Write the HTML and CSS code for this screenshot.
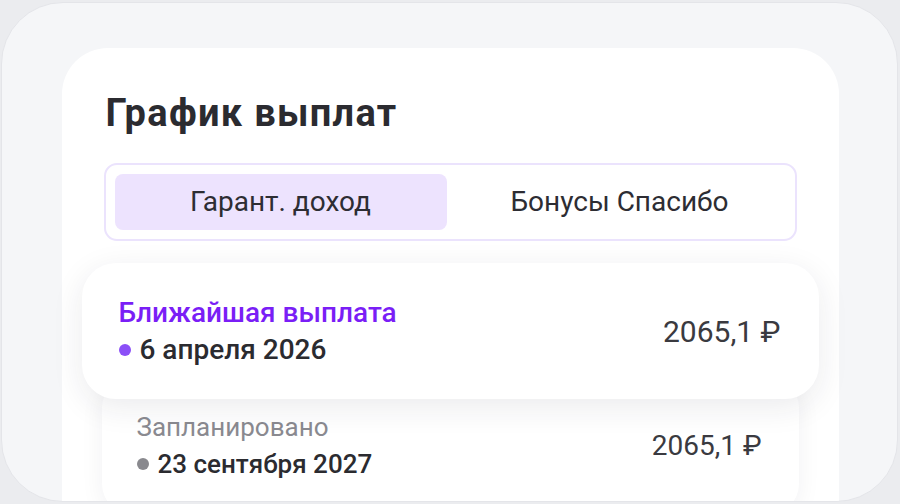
FILE: index.html
```html
<!DOCTYPE html>
<html lang="ru">
<head>
<meta charset="utf-8">
<link rel="stylesheet" href="styles.css">
</head>
<body>
<div class="frame">
  <div class="sheet">
    <h1 class="title">График выплат</h1>
    <div class="tabs">
      <div class="tab tab-active">Гарант. доход</div>
      <div class="tab">Бонусы Спасибо</div>
    </div>
    <div class="list">
      <div class="pay pay-next">
        <div class="pay-info">
          <div class="pay-label">Ближайшая выплата</div>
          <div class="pay-date"><span class="dot dot-purple"></span>6 апреля 2026</div>
        </div>
        <div class="pay-sum">2065,1 ₽</div>
      </div>
      <div class="pay pay-planned">
        <div class="pay-info">
          <div class="pay-label">Запланировано</div>
          <div class="pay-date"><span class="dot dot-gray"></span>23 сентября 2027</div>
        </div>
        <div class="pay-sum">2065,1 ₽</div>
      </div>
    </div>
  </div>
</div>
</body>
</html>
```
FILE: styles.css
```css
* { box-sizing: border-box; }
html, body { margin: 0; padding: 0; }
body {
  background: #ebecef;
  font-family: Roboto, "Noto Sans", "Liberation Sans", sans-serif;
  width: 900px;
  height: 504px;
  overflow: hidden;
}
.frame {
  margin: 2px 2px 0 1px;
  height: 500px;
  border: 1.5px solid #e4e5e9;
  border-radius: 62px;
  background: #f5f6f8;
  overflow: hidden;
  padding: 44.5px 58.5px 0 59.5px;
}
.sheet {
  background: #fff;
  border-radius: 46px 46px 0 0;
  height: 520px;
  padding: 44px 42px 0 42px;
}
.title {
  margin: 0 0 0 2px;
  font-size: 38px;
  line-height: 42px;
  font-weight: 700;
  color: #2b2b30;
  letter-spacing: 1.3px;
}
.tabs {
  margin-top: 29px;
  height: 78px;
  border: 2px solid #ebe3fd;
  border-radius: 13px;
  padding: 9px;
  display: grid;
  grid-template-columns: 1fr 1fr;
  gap: 7px;
}
.tab {
  display: flex;
  align-items: center;
  justify-content: center;
  border-radius: 8px;
  font-size: 28px;
  color: #2d2d33;
}
.tab-active { background: #ede3fe; }
.list {
  margin-top: 22px;
  display: flex;
  flex-direction: column;
}
.pay {
  display: flex;
  align-items: center;
  justify-content: space-between;
  background: #fff;
}
.pay-next {
  position: relative;
  z-index: 2;
  margin: 0 -22px;
  height: 136px;
  border-radius: 34px;
  padding: 2px 38px 0 37px;
  box-shadow: 0 8px 32px rgba(30, 30, 50, 0.09);
}
.pay-planned {
  position: relative;
  z-index: 1;
  margin: -21px -2px 0 -2px;
  height: 136px;
  border-radius: 30px;
  padding: 0 37px 0 35px;
  box-shadow: 0 4px 24px rgba(30, 30, 50, 0.06);
}
.pay-label {
  font-size: 28px;
  line-height: 36px;
  font-weight: 500;
  color: #7a1ef6;
}
.pay-date {
  display: flex;
  align-items: center;
  font-size: 28px;
  line-height: 38px;
  font-weight: 500;
  color: #2b2b30;
}
.dot {
  width: 12px;
  height: 12px;
  border-radius: 50%;
  margin: 0 9px 0 0;
}
.dot-purple { background: #8b4ff7; }
.dot-gray { background: #89898e; }
.pay-sum {
  font-size: 30px;
  color: #3a3a40;
}
.pay-planned .pay-label {
  font-size: 26px;
  font-weight: 400;
  color: #8a8a90;
}
.pay-planned .pay-date { font-size: 26px; }
.pay-planned .pay-sum { font-size: 28px; }
```
